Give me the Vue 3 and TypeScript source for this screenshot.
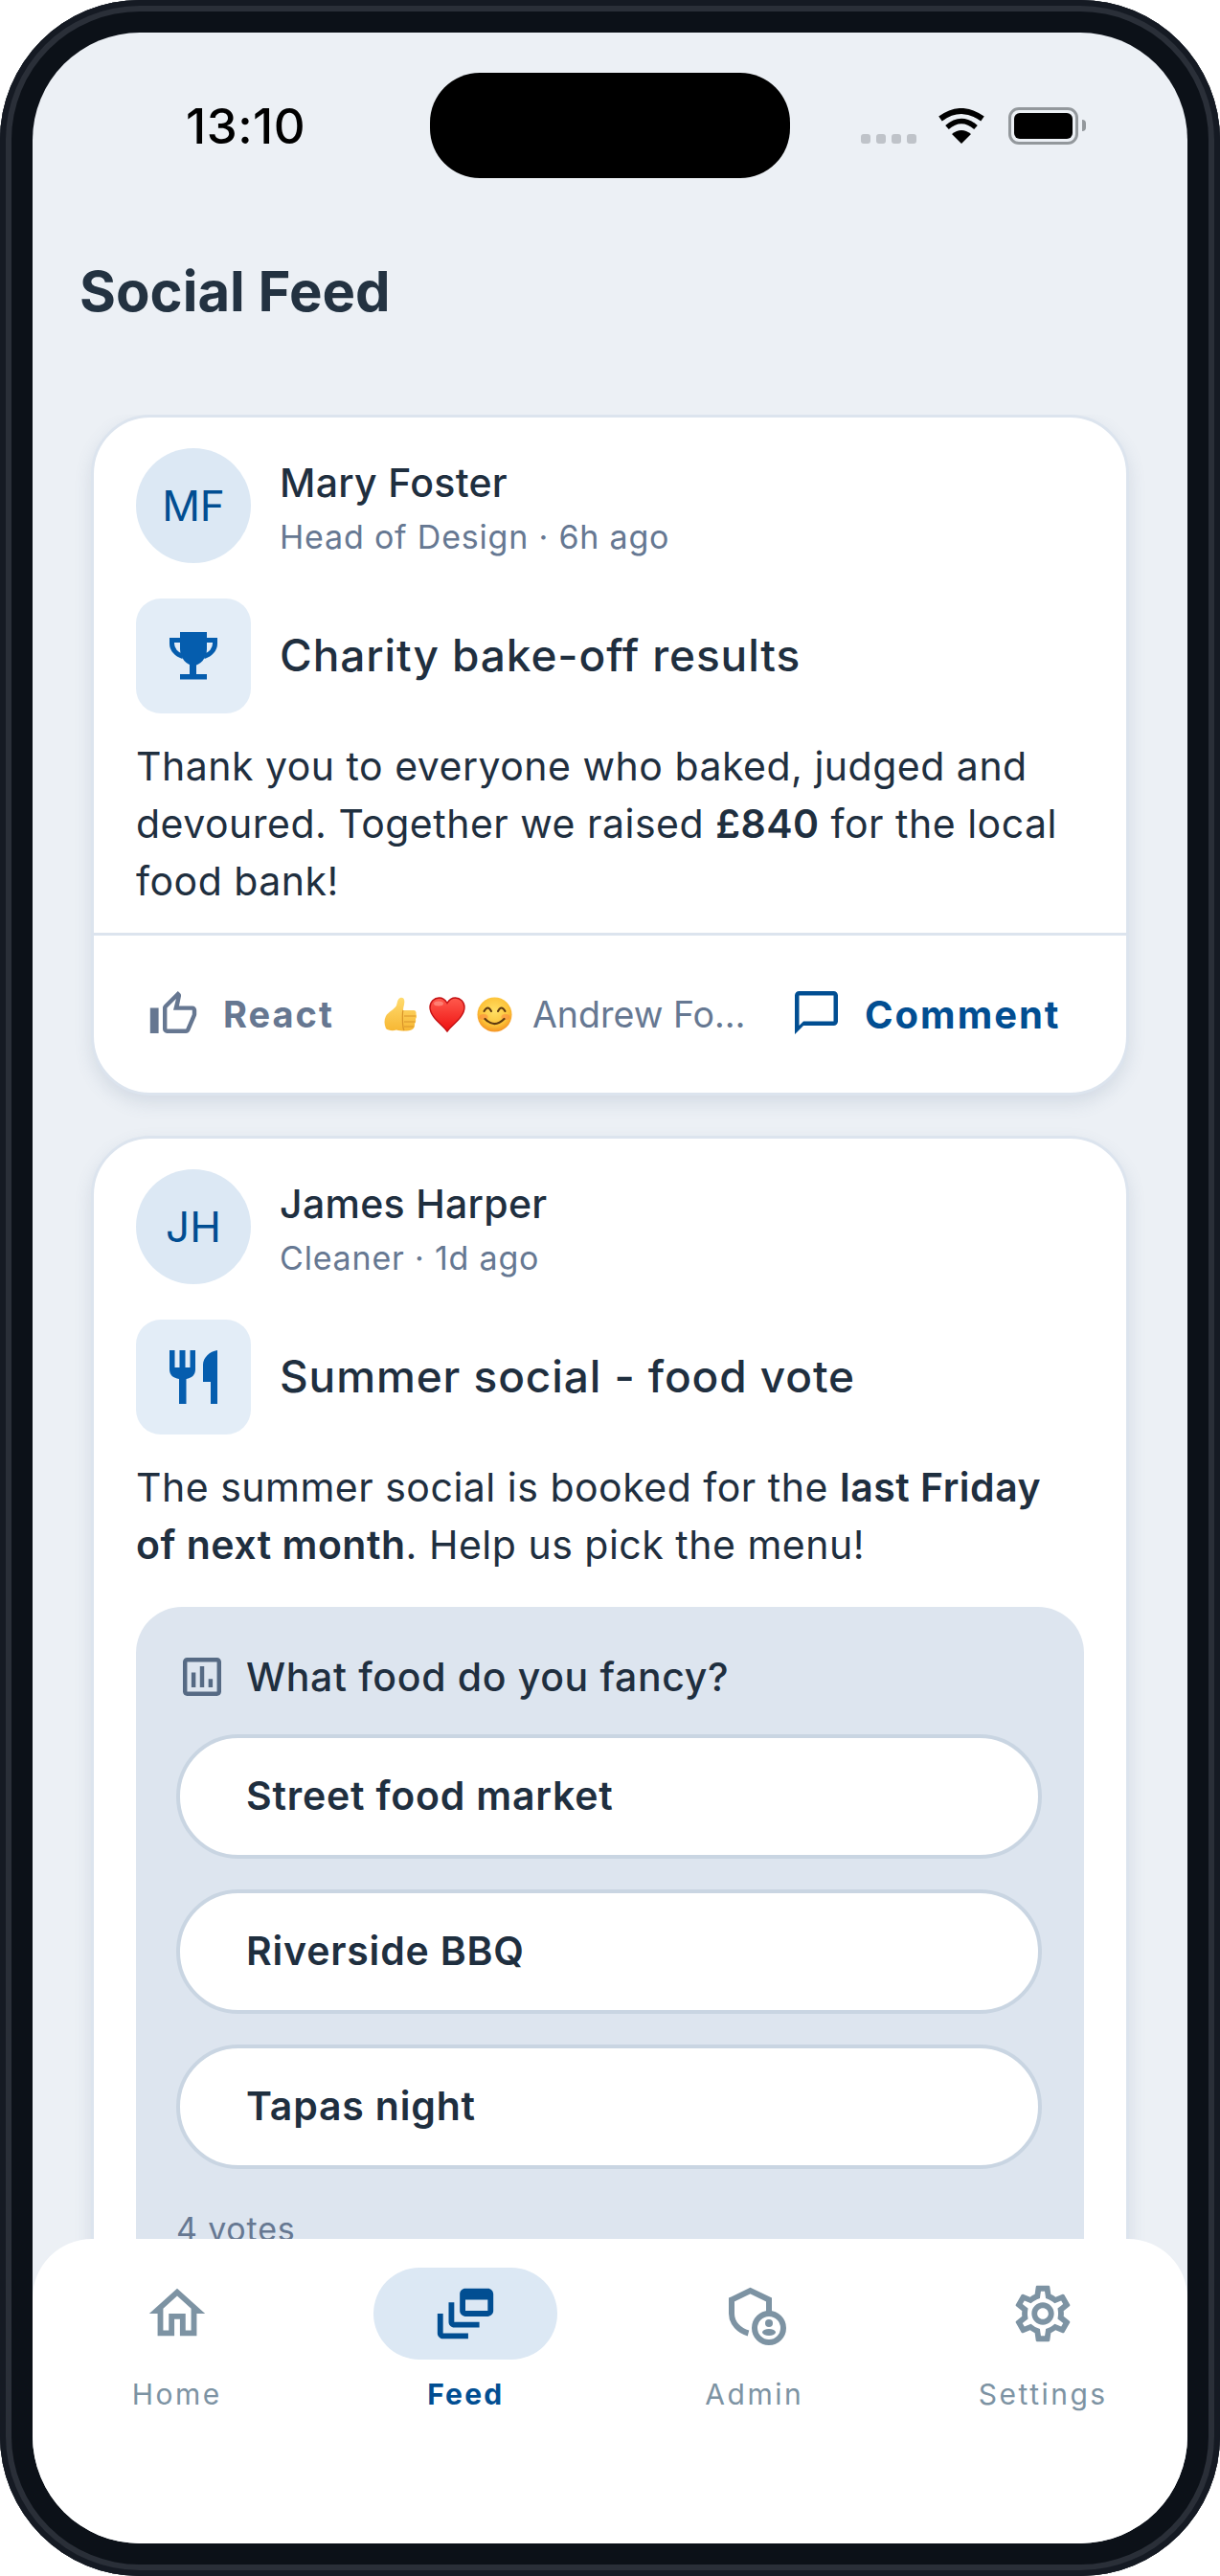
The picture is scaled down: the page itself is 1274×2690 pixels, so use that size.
<script setup lang="ts">
interface Tab { label: string; active?: boolean; box: string; d?: string }
const tabs: Tab[] = [
  { label: 'Home', box: '0 0 24 24', d: 'M12 5.69l5 4.5V18h-2v-6H9v6H7v-7.81l5-4.5M12 3L2 12h3v8h6v-6h2v6h6v-8h3L12 3z' },
  { label: 'Feed', active: true, box: '0 0 24 24', d: 'M8 8H6v7c0 1.1.9 2 2 2h9v-2H8V8zM20 3h-8c-1.1 0-2 .9-2 2v6c0 1.1.9 2 2 2h8c1.1 0 2-.9 2-2V5c0-1.1-.9-2-2-2zm0 8h-8V7h8v4zM4 12H2v7c0 1.1.9 2 2 2h9v-2H4v-7z' },
  { label: 'Admin', box: '-8 -8 70 70' },
  { label: 'Settings', box: '0 0 24 24', d: 'M19.43 12.98c.04-.32.07-.64.07-.98 0-.34-.03-.66-.07-.98l2.11-1.65c.19-.15.24-.42.12-.64l-2-3.46c-.09-.16-.26-.25-.44-.25-.06 0-.12.01-.17.03l-2.49 1c-.52-.4-1.08-.73-1.69-.98l-.38-2.65C14.46 2.18 14.25 2 14 2h-4c-.25 0-.46.18-.49.42l-.38 2.65c-.61.25-1.17.59-1.69.98l-2.49-1c-.06-.02-.12-.03-.18-.03-.17 0-.34.09-.43.25l-2 3.46c-.13.22-.07.49.12.64l2.11 1.65c-.04.32-.07.65-.07.98 0 .33.03.66.07.98l-2.11 1.65c-.19.15-.24.42-.12.64l2 3.46c.09.16.26.25.44.25.06 0 .12-.01.17-.03l2.49-1c.52.4 1.08.73 1.69.98l.38 2.65c.03.24.24.42.49.42h4c.25 0 .46-.18.49-.42l.38-2.65c.61-.25 1.17-.59 1.69-.98l2.49 1c.06.02.12.03.18.03.17 0 .34-.09.43-.25l2-3.46c.12-.22.07-.49-.12-.64l-2.11-1.65zm-1.98-1.71c.04.31.05.52.05.73 0 .21-.02.43-.05.73l-.14 1.13.89.7 1.08.84-.7 1.21-1.27-.51-1.04-.42-.9.68c-.43.32-.84.56-1.25.73l-1.06.43-.16 1.13-.2 1.35h-1.4l-.19-1.35-.16-1.13-1.06-.43c-.43-.18-.83-.41-1.23-.71l-.91-.7-1.06.43-1.27.51-.7-1.21 1.08-.84.89-.7-.14-1.13c-.03-.31-.05-.54-.05-.74s.02-.43.05-.73l.14-1.13-.89-.7-1.08-.84.7-1.21 1.27.51 1.04.42.9-.68c.43-.32.84-.56 1.25-.73l1.06-.43.16-1.13.2-1.35h1.39l.19 1.35.16 1.13 1.06.43c.43.18.83.41 1.23.71l.91.7 1.06-.43 1.27-.51.7 1.21-1.07.85-.89.7.14 1.13zM12 8c-2.21 0-4 1.79-4 4s1.79 4 4 4 4-1.79 4-4-1.79-4-4-4zm0 6c-1.1 0-2-.9-2-2s.9-2 2-2 2 .9 2 2-.9 2-2 2z' },
]
const options: string[] = ['Street food market', 'Riverside BBQ', 'Tapas night']
</script>

<template>
  <div class="phone">
    <div class="screen">
      <div class="status">
        <span class="time">13:10</span>
        <div class="island"></div>
        <div class="dots"><i></i><i></i><i></i><i></i></div>
        <svg class="wifi" viewBox="0 0 50 37" width="50" height="37">
          <path d="M3 11 Q25 -5 47 11" fill="none" stroke="#000" stroke-width="6" />
          <path d="M10 20 Q25 7 40 20" fill="none" stroke="#000" stroke-width="5.5" />
          <path d="M25 37 L15 27 Q25 19 35 27 Z" fill="#000" />
        </svg>
        <div class="battery"><div class="cell"></div></div>
        <div class="nub"></div>
      </div>

      <h1 class="title">Social Feed</h1>

      <div class="feed">
        <article class="card">
          <div class="body-pad">
            <div class="author">
              <div class="avatar">MF</div>
              <div class="who">
                <div class="name">Mary Foster</div>
                <div class="meta">Head of Design · 6h ago</div>
              </div>
            </div>
            <div class="head">
              <div class="tile">
                <svg viewBox="0 0 50 50" width="50" height="50">
                  <path d="M11 0H39V18C39 27 32 35 25 35 18 35 11 27 11 18Z" fill="#055dae" />
                  <path d="M12 8.5H2.5V12C2.5 18 7 23.5 14 25.5M38 8.5H47.5V12C47.5 18 43 23.5 36 25.5" fill="none" stroke="#055dae" stroke-width="5" />
                  <rect x="21" y="33" width="7" height="12" fill="#055dae" />
                  <rect x="11" y="44" width="28" height="5.500" fill="#055dae" />
                </svg>
              </div>
              <h2 class="headline">Charity bake-off results</h2>
            </div>
            <p class="text">Thank you to everyone who baked, judged and devoured. Together we raised <strong>£840</strong> for the local food bank!</p>
          </div>
          <div class="actions">
            <svg class="ic-react" viewBox="1 1 22 20" width="50" height="44">
              <path d="M9 21h9c.83 0 1.54-.5 1.84-1.22l3.02-7.05c.09-.23.14-.47.14-.73v-2c0-1.1-.9-2-2-2h-6.31l.95-4.57.03-.32c0-.41-.17-.79-.44-1.06L14.17 1 7.58 7.59C7.22 7.95 7 8.45 7 9v10c0 1.1.9 2 2 2zM9 9l4.34-4.34L12 10h9v2l-3 7H9V9zM1 9h4v12H1z" fill="#667791" />
            </svg>
            <span class="react">React</span>
            <div class="emojis">
              <svg viewBox="0 0 35 37" width="35" height="37">
                <defs>
                  <linearGradient id="thumbG" x1="0" y1="0" x2="0" y2="1"><stop offset="0" stop-color="#ffdb6e" /><stop offset="1" stop-color="#f7b733" /></linearGradient>
                </defs>
                <path d="M2 20C4 16 11 13 13 9C14 6 14 2 17 1C21 0 22 4 21 8C20.500 10 20 12 20 14H31C33 14 34 16 33.500 18C34.500 20 34 22 33 23C33.500 25 33 27 32 28C32.500 30 31.500 33 29.500 34C26 36 18 36 13 34.500C9 36 4 35 2 33C0 28 0 24 2 20Z" fill="url(#thumbG)" />
                <path d="M21 20H33M21 26H32.500M21 31H31M20 14C19 16 19 32 21 35" fill="none" stroke="#d9942a" stroke-width="1.200" />
              </svg>
              <svg viewBox="0 0 38 37" width="38" height="37">
                <defs>
                  <linearGradient id="heartG" x1="0" y1="0" x2="0" y2="1"><stop offset="0" stop-color="#ff5a4d" /><stop offset="1" stop-color="#ee1111" /></linearGradient>
                </defs>
                <path d="M19 36C14 29 1 21 1 11C1 5 5.500 1 10.500 1C14 1 17 3 19 6.500C21 3 24 1 27.500 1C32.500 1 37 5 37 11C37 21 24 29 19 36Z" fill="url(#heartG)" stroke="#c30f12" stroke-width="1.400" />
                <ellipse cx="10" cy="7" rx="5" ry="2.500" fill="#ff9488" opacity=".7" />
              </svg>
              <svg viewBox="0 0 37 37" width="37" height="37">
                <defs>
                  <radialGradient id="faceG" cx=".5" cy=".4" r=".6"><stop offset="0" stop-color="#ffe065" /><stop offset=".7" stop-color="#fcc238" /><stop offset="1" stop-color="#f59323" /></radialGradient>
                </defs>
                <circle cx="18.500" cy="18.500" r="18" fill="url(#faceG)" />
                <ellipse cx="7" cy="21" rx="4.500" ry="3" fill="#f9853f" opacity=".55" />
                <ellipse cx="30" cy="21" rx="4.500" ry="3" fill="#f9853f" opacity=".55" />
                <path d="M7.500 15Q11.500 8 15 15M22 15Q25.500 8 29.500 15" fill="none" stroke="#5f3a10" stroke-width="2" stroke-linecap="round" />
                <path d="M8.500 23Q18.500 33 28.500 23" fill="none" stroke="#5f3a10" stroke-width="2.200" stroke-linecap="round" />
              </svg>
            </div>
            <span class="reactors">Andrew Fo…</span>
            <svg class="ic-comment" viewBox="2 2 20 20" width="45" height="45">
              <path d="M20 2H4c-1.100 0-2 .9-2 2v18l4-4h14c1.100 0 2-.9 2-2V4c0-1.100-.9-2-2-2zm0 14H6l-2 2V4h16v12z" fill="#014e92" />
            </svg>
            <span class="comment">Comment</span>
          </div>
        </article>

        <article class="card">
          <div class="body-pad">
            <div class="author">
              <div class="avatar">JH</div>
              <div class="who">
                <div class="name">James Harper</div>
                <div class="meta">Cleaner · 1d ago</div>
              </div>
            </div>
            <div class="head">
              <div class="tile">
                <svg viewBox="0 0 50 56" width="50" height="56">
                  <path d="M0 0H5.500V18H10.500V0H16.500V18H21.500V0H27V20C27 26 23 29 17.500 30V56H10V30C4 29 0 26 0 20Z" fill="#055dae" />
                  <path d="M50 0V56H43V33H35V15C35 8 42 1 50 0Z" fill="#055dae" />
                </svg>
              </div>
              <h2 class="headline">Summer social - food vote</h2>
            </div>
            <p class="text">The summer social is booked for the <strong>last Friday of next month</strong>. Help us pick the menu!</p>
            <section class="poll">
              <div class="poll-q">
                <svg viewBox="3 3 18 18" width="40" height="40">
                  <path d="M19 3H5c-1.100 0-2 .9-2 2v14c0 1.100.9 2 2 2h14c1.100 0 2-.9 2-2V5c0-1.100-.9-2-2-2zm0 16H5V5h14v14zM7 10h2v7H7zm4-3h2v10h-2zm4 6h2v4h-2z" fill="#566a84" />
                </svg>
                <span>What food do you fancy?</span>
              </div>
              <div class="opts">
                <div v-for="o in options" :key="o" class="opt">{{ o }}</div>
              </div>
              <div class="votes">4 votes</div>
            </section>
          </div>
        </article>
      </div>

      <nav class="nav">
        <div v-for="t in tabs" :key="t.label" class="tab" :class="{ on: t.active }">
          <div class="pill">
            <svg :viewBox="t.box" width="70" height="70">
              <path v-if="t.d" :d="t.d" fill="currentColor" />
              <g v-else>
                <path d="M42 26V12.500L22.500 3 3 12.500V27C3 37 11 45 20.500 47.500" fill="none" stroke="currentColor" stroke-width="6" />
                <circle cx="42" cy="42" r="15" fill="none" stroke="currentColor" stroke-width="6" />
                <circle cx="42" cy="37" r="4" fill="currentColor" />
                <ellipse cx="42" cy="46.500" rx="7" ry="3.500" fill="currentColor" />
              </g>
            </svg>
          </div>
          <span class="tab-label">{{ t.label }}</span>
        </div>
      </nav>
    </div>
  </div>
</template>

<style>
html, body { background: #fff; margin: 0; }
</style>

<style scoped>
* { box-sizing: border-box; }
.phone {
  width: 1274px;
  height: 2690px;
  padding: 34px;
  display: flex;
  background: #0c1118;
  border-radius: 146px;
  box-shadow: inset 0 0 0 6px #151a23, inset 0 0 0 12px #2a2f38;
  font-family: Inter, "Liberation Sans", sans-serif;
  color: #1f2f3f;
}
.screen {
  position: relative;
  flex: 1;
  display: flex;
  flex-direction: column;
  overflow: hidden;
  border-radius: 112px;
  background: #ecf0f5;
}
.status { display: flex; align-items: center; height: 110px; margin-top: 42px; flex: none; }
.time { margin-left: 160px; width: 255px; font-size: 51px; font-weight: 500; letter-spacing: .5px; color: #000; }
.island { width: 376px; height: 110px; border-radius: 52px; background: #000; }
.dots { display: flex; gap: 6px; margin-left: 74px; margin-top: 28px; }
.dots i { width: 10px; height: 10px; border-radius: 3px; background: #bfc3c9; }
.wifi { margin-left: 22px; }
.battery { margin-left: 24px; width: 73px; height: 39px; padding: 3px; border: 3px solid #93989c; border-radius: 11px; }
.cell { width: 100%; height: 100%; background: #000; border-radius: 6px; }
.nub { width: 4px; height: 12px; margin-left: 4px; background: #93989c; border-radius: 0 4px 4px 0; }
.title { flex: none; margin: 83px 0 94px 49px; font-size: 58px; line-height: 70px; font-weight: 700; color: #233241; }
.feed { flex: 1; min-height: 0; overflow: hidden; padding: 0 61px; display: flex; flex-direction: column; gap: 42px; }
.card { flex: none; background: #fff; border: 3px solid #dce4ee; border-radius: 62px; box-shadow: 0 8px 18px rgba(90, 110, 140, .16); overflow: hidden; }
.body-pad { padding: 32px 44px 24px; }
.author { display: flex; align-items: center; gap: 30px; }
.avatar { width: 120px; height: 120px; flex: none; border-radius: 50%; background: #dce8f4; color: #014e92; display: flex; align-items: center; justify-content: center; font-size: 44px; }
.who { display: flex; flex-direction: column; gap: 12px; padding-top: 6px; }
.name { font-size: 41px; line-height: 48px; font-weight: 500; letter-spacing: .3px; }
.meta { font-size: 34px; line-height: 42px; color: #667892; letter-spacing: .8px; }
.head { display: flex; align-items: center; gap: 30px; margin-top: 37px; }
.tile { width: 120px; height: 120px; flex: none; border-radius: 26px; background: #e3edf7; display: flex; align-items: center; justify-content: center; }
.headline { margin: 0 0 3px; font-size: 46px; font-weight: 500; letter-spacing: .9px; }
.text { margin: 25px 0 0; font-size: 41px; line-height: 60px; letter-spacing: .5px; }
.text strong { font-weight: 600; }
.actions { display: flex; align-items: center; height: 167px; border-top: 3px solid #dce4ee; padding: 0 0 0 58px; }
.ic-react { flex: none; margin-bottom: 4px; }
.react { margin-left: 27px; width: 168px; font-size: 38px; font-weight: 700; letter-spacing: 2px; color: #667791; }
.emojis { display: flex; align-items: center; gap: 12px; width: 155px; }
.reactors { width: 274px; font-size: 37.5px; color: #667892; white-space: nowrap; }
.comment { margin-left: 28px; font-size: 40px; font-weight: 700; letter-spacing: 2px; color: #014e92; }
.ic-comment { flex: none; margin-bottom: 4px; }
.poll { margin-top: 35px; padding: 53px 44px 0 42px; height: 800px; border-radius: 48px; background: #dde5ef; }
.poll-q { display: flex; align-items: center; gap: 26px; height: 40px; padding-left: 7px; font-size: 41px; font-weight: 500; letter-spacing: .65px; }
.opts { display: flex; flex-direction: column; gap: 32px; margin-top: 40px; }
.opt { height: 130px; display: flex; align-items: center; padding: 0 0 2px 69px; border: 4px solid #c9d5e2; border-radius: 65px; background: #fff; font-size: 41px; font-weight: 600; letter-spacing: .8px; }
.votes { margin-top: 43px; line-height: 40px; font-size: 34px; color: #667892; letter-spacing: .8px; }
.nav { position: absolute; left: 0; right: 0; bottom: 0; height: 318px; background: #fff; border-radius: 62px 62px 0 0; display: grid; grid-template-columns: repeat(4, 1fr); }
.tab { display: flex; flex-direction: column; align-items: center; color: #7d93a3; }
.pill { width: 192px; height: 96px; margin-top: 30px; border-radius: 48px; display: flex; align-items: center; justify-content: center; }
.tab.on { color: #014e92; }
.tab.on .pill { background: #dce8f4; }
.tab-label { margin-top: 16px; line-height: 40px; font-size: 30px; letter-spacing: 2.5px; }
.tab.on .tab-label { font-weight: 700; letter-spacing: 2.2px; }
</style>
